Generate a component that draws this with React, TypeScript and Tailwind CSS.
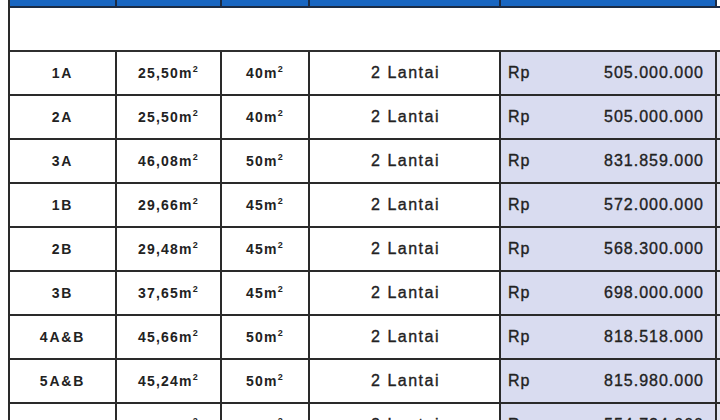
import React from "react";

const rows = [
  { t: "1A", l: "25,50", b: "40", p: "505.000.000" },
  { t: "2A", l: "25,50", b: "40", p: "505.000.000" },
  { t: "3A", l: "46,08", b: "50", p: "831.859.000" },
  { t: "1B", l: "29,66", b: "45", p: "572.000.000" },
  { t: "2B", l: "29,48", b: "45", p: "568.300.000" },
  { t: "3B", l: "37,65", b: "45", p: "698.000.000" },
  { t: "4A&B", l: "45,66", b: "50", p: "818.518.000" },
  { t: "5A&B", l: "45,24", b: "50", p: "815.980.000" },
  { t: "6B", l: "35,00", b: "45", p: "554.724.000" },
];

const grid = "grid grid-cols-[107px_105px_88px_191px_216px_1fr]";

export default function App() {
  return (
    <div className="w-[720px] h-[420px] overflow-hidden bg-white pl-[8px] text-[#222]" style={{ fontFamily: '"Liberation Sans", Arial, sans-serif' }}>
      <div className="border-l-2 border-[#2a2a2a]">
        <div className={`${grid} h-[8px] border-b-2 border-[#1b2b44] bg-[#1866c2]`}>
          <div className="border-r-2 border-[#1b2b44]" />
          <div className="border-r-2 border-[#1b2b44]" />
          <div className="border-r-2 border-[#1b2b44]" />
          <div className="border-r-2 border-[#1b2b44]" />
          <div className="border-r-2 border-[#1b2b44]" />
          <div className="bg-white" />
        </div>
        <div className="h-[44px] border-b-2 border-[#2f2f2f] bg-white" />
        {rows.map((r, i) => (
          <div key={i} className={`${grid} h-[44px] border-b-2 border-[#2a2a2a]`}>
            <div className="flex items-center justify-center border-r-2 border-[#2a2a2a] text-[14px] font-bold tracking-[1.8px]">
              {r.t}
            </div>
            <div className="flex items-center justify-center border-r-2 border-[#2a2a2a] text-[14px] font-bold tracking-[1.2px]">
              <span>
                {r.l}m<sup className="text-[9px] -top-[0.6em]">2</sup>
              </span>
            </div>
            <div className="flex items-center justify-center border-r-2 border-[#2a2a2a] text-[14px] font-bold tracking-[1.2px]">
              <span>
                {r.b}m<sup className="text-[9px] -top-[0.6em]">2</sup>
              </span>
            </div>
            <div className="flex items-center justify-center border-r-2 border-[#2a2a2a] text-[16px] tracking-[1.5px] pl-[2px] [-webkit-text-stroke:0.35px_#222]">
              2 Lantai
            </div>
            <div className="flex items-center justify-between border-r-2 border-[#2a2a2a] bg-[#d9dcf0] pl-[7px] pr-[11px] text-[16px] tracking-[1px] [-webkit-text-stroke:0.35px_#222]">
              <span>Rp</span>
              <span>{r.p}</span>
            </div>
            <div className="bg-[#e2e4f0]" />
          </div>
        ))}
      </div>
    </div>
  );
}
